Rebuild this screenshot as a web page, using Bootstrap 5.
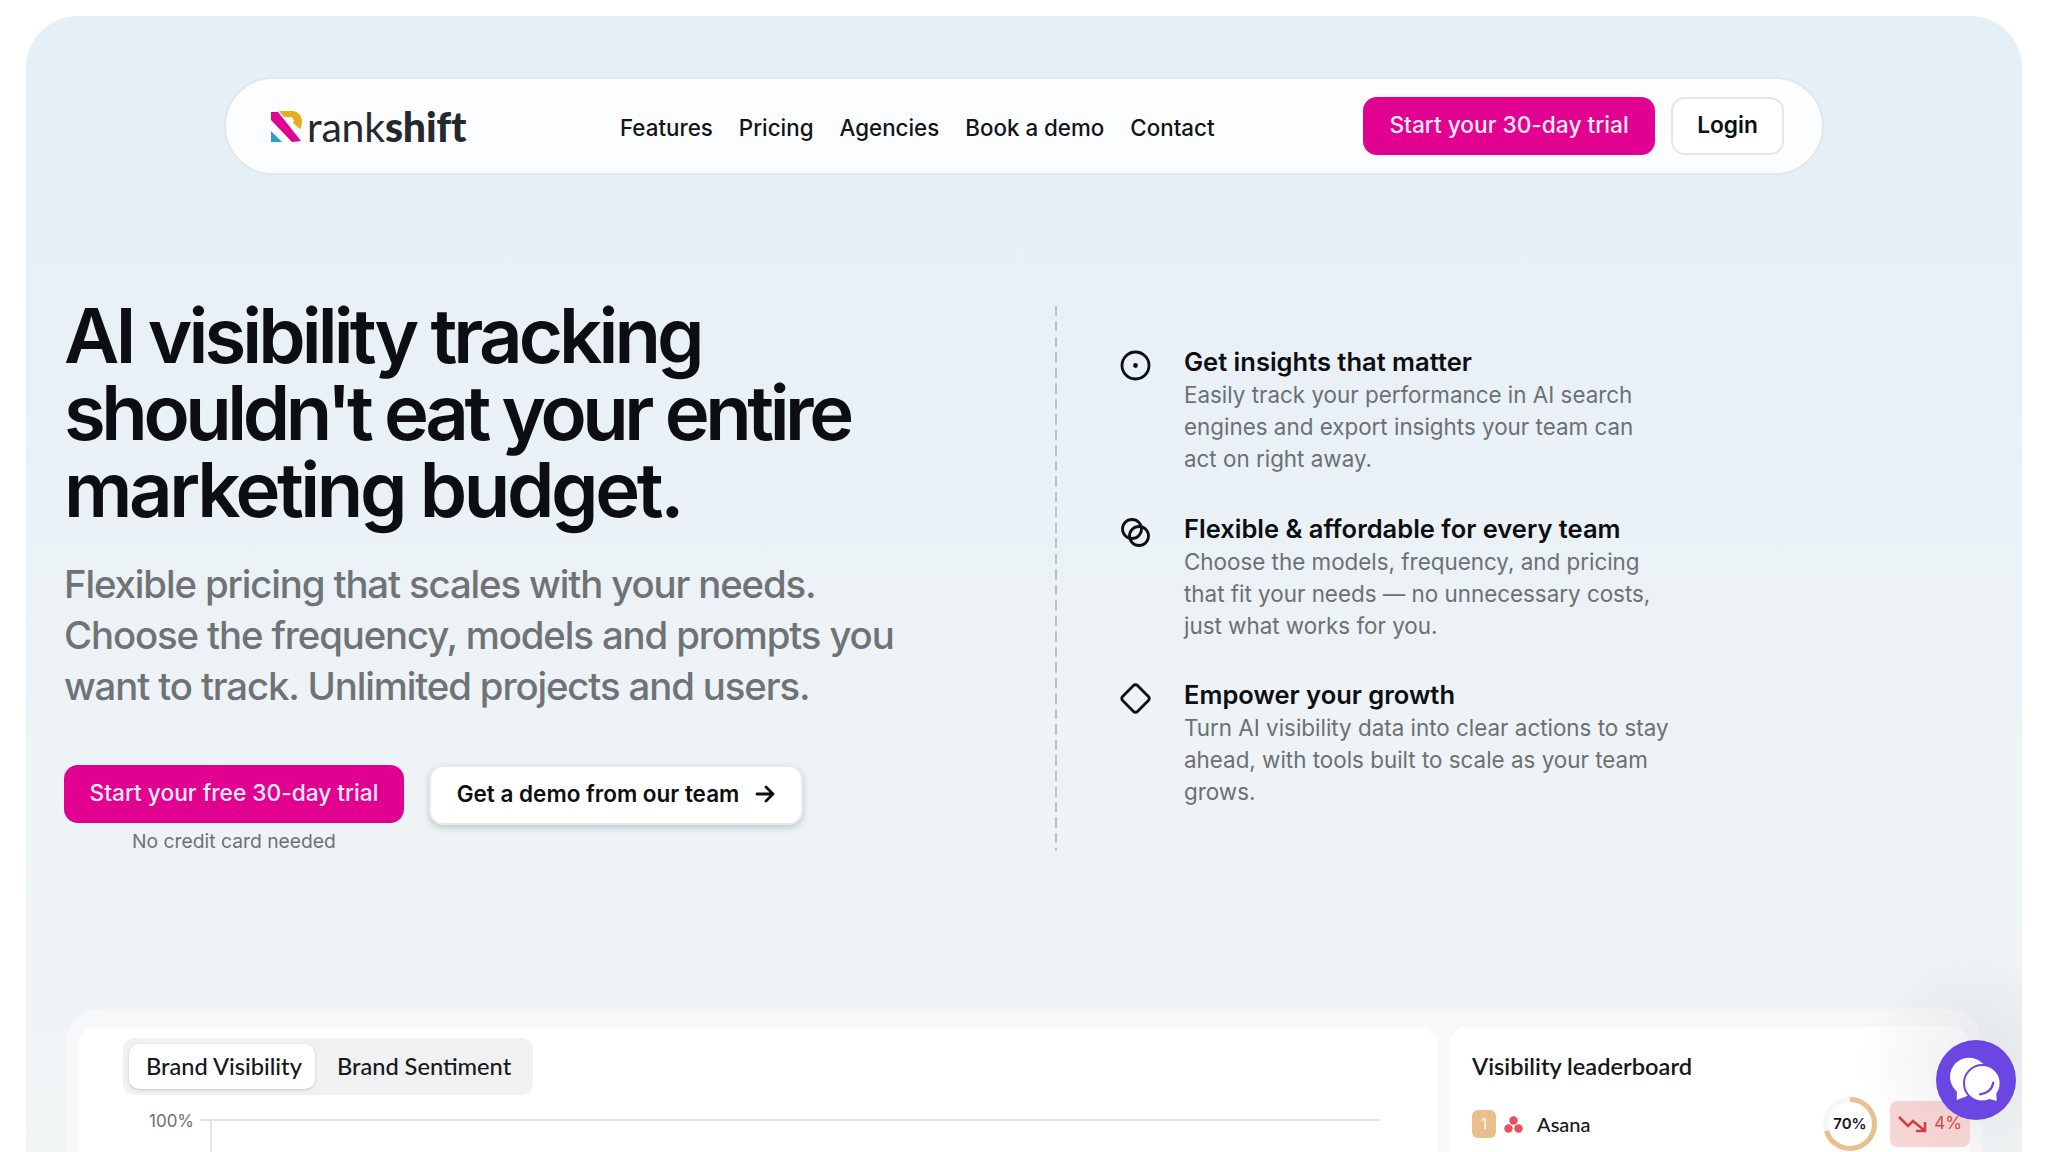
<!DOCTYPE html>
<html lang="en">
  <head>
    <meta charset="UTF-8" />
    <meta name="viewport" content="width=device-width, initial-scale=1.0" />
    <title>Rankshift</title>
    <link
      href="https://cdn.jsdelivr.net/npm/bootstrap@5.3.5/dist/css/bootstrap.min.css"
      rel="stylesheet"
    />
    <style>
      html,
      body {
        height: 1152px;
        overflow: hidden;
        background: #fff;
      }

      body {
        font-family: "Inter", "Liberation Sans", sans-serif;
      }

      .page-panel {
        position: relative;
        height: 1136px;
        margin: 16px 26px 0 26px;
        padding: 61px 38px 0 38px;
        border-radius: 52px 52px 0 0;
        background: linear-gradient(180deg, #e4eff7 0%, #eef3f6 65%, #f0f4f5 100%);
        overflow: hidden;
      }

      .top-bar {
        width: 1600px;
        height: 98px;
        margin-left: 160px;
        padding: 0 38px 0 45px;
        border: 2px solid #e2e7ea;
        border-radius: 49px;
        background: rgba(255, 255, 255, 0.85);
      }

      .logo-wrap {
        width: 349px;
      }

      .logo-text {
        font-family: "Lato", "Liberation Sans", sans-serif;
        font-size: 41px;
        line-height: 1;
        letter-spacing: -0.2px;
        color: #25282c;
      }

      .logo-text b {
        font-weight: 900;
      }

      .menu-link {
        font-size: 22.35px;
        font-weight: 500;
        color: #121416;
        text-decoration: none;
      }

      .menu-gap {
        gap: 26px;
        margin-top: 3px;
      }

      .btn-pink {
        background: #e20091;
        color: #fcebf6;
        font-size: 22.7px;
        font-weight: 500;
        border: 0;
        border-radius: 14px;
        height: 58px;
        width: 292px;
        padding: 0 0 2px 0;
      }

      .btn-pink:hover {
        background: #e20091;
        color: #fcebf6;
      }

      .btn-login {
        background: #fff;
        color: #0c0e10;
        font-size: 22.7px;
        font-weight: 600;
        border: 2px solid #e4e6e8;
        border-radius: 14px;
        height: 58px;
        width: 113px;
        padding: 0 0 2px 0;
      }

      .hero-row {
        height: 834px;
        padding-top: 122px;
      }

      .hero-left {
        width: 991px;
      }

      .hero-title {
        font-family: "Inter", "Liberation Sans", sans-serif;
        font-size: 76px;
        line-height: 77px;
        font-weight: 600;
        letter-spacing: -3.9px;
        color: #0c0e12;
        margin: 0 0 31px 0;
        white-space: nowrap;
      }

      .title-line-two {
        letter-spacing: -4.45px;
      }

      .title-line-three {
        letter-spacing: -3.4px;
      }

      .hero-sub {
        font-size: 38.35px;
        line-height: 51px;
        font-weight: 500;
        letter-spacing: -1.12px;
        color: #6f7376;
        margin: 0 0 53px 0;
        white-space: nowrap;
      }

      .btn-pink-lg {
        height: 58px;
        width: 340px;
      }

      .btn-demo {
        background: #fff;
        color: #0c0e10;
        font-size: 22.5px;
        font-weight: 600;
        border: 2px solid #e8eaec;
        border-radius: 14px;
        height: 60px;
        width: 374px;
        padding: 0 0 2px 0;
        box-shadow: 0 3px 6px rgba(60, 70, 80, 0.25);
      }

      .hero-actions {
        gap: 25px;
      }

      .note-text {
        width: 340px;
        font-size: 19.3px;
        color: #6e7276;
        text-align: center;
      }

      .hero-divider {
        width: 2px;
        height: 545px;
        margin-top: 9px;
        background: repeating-linear-gradient(180deg, #bcc1c4 0 10px, transparent 10px 15.5px);
      }

      .feature-list {
        width: 550px;
        margin-left: 63px;
        padding-top: 49px;
      }

      .feature-item {
        gap: 33px;
        margin-bottom: 37.5px;
      }

      .feature-icon {
        flex: 0 0 31px;
        margin-top: 4px;
      }

      .feature-title {
        font-size: 25.5px;
        line-height: 31px;
        padding-bottom: 2px;
        font-weight: 600;
        color: #0c0e12;
      }

      .feature-desc {
        font-size: 22.4px;
        line-height: 32px;
        color: #6b7075;
      }

      .dash-shell {
        width: 1918px;
        margin-left: 1px;
        padding: 18px 13px 0 13px;
        border-radius: 36px 36px 0 0;
        background: #f7f8f9;
        gap: 11px;
      }

      .dash-chart {
        width: 1360px;
        height: 300px;
        padding: 11px 45px;
        background: #fff;
        border-radius: 18px 18px 0 0;
      }

      .dash-board {
        width: 521px;
        height: 300px;
        padding: 24px 0 24px 23px;
        background: #fff;
        border-radius: 18px 18px 0 0;
      }

      .tab-box {
        width: 410px;
        height: 57px;
        padding: 6px;
        gap: 0;
        background: #f1f1f1;
        border-radius: 12px;
      }

      .tab-item {
        font-family: "Lato", "Inter", sans-serif;
        font-size: 23.6px;
        font-weight: 500;
        color: #15181b;
        padding: 0 0 0 22px;
        border-radius: 10px;
        white-space: nowrap;
      }

      .tab-on {
        padding: 0 13px 0 17px;
        background: #fff;
        box-shadow: 0 1px 3px rgba(0, 0, 0, 0.18);
      }

      .axis-label {
        width: 72px;
        margin-top: 16px;
        padding-left: 26px;
        font-size: 17px;
        line-height: 20px;
        color: #6b6f72;
      }

      .axis-plot {
        width: 1180px;
        height: 60px;
        margin-top: 24px;
        margin-left: 5px;
        border-top: 2px solid #e2e3e5;
      }

      .axis-stem {
        height: 60px;
        margin-left: 10px;
        border-left: 2px solid #e2e3e5;
      }

      .board-title {
        font-family: "Lato", "Inter", sans-serif;
        font-size: 23.6px;
        font-weight: 600;
        color: #15181b;
        line-height: 30px;
        margin-bottom: 16px;
      }

      .rank-box {
        width: 24px;
        height: 28px;
        border-radius: 6px;
        background: #e7c08e;
        color: #fdf6ec;
        font-size: 15px;
        line-height: 28px;
        text-align: center;
      }

      .brand-name {
        font-family: "Lato", "Inter", sans-serif;
        font-size: 20px;
        font-weight: 500;
        color: #15181b;
        margin-left: 14px;
      }

      .ring-box {
        width: 54px;
        height: 54px;
      }

      .ring-text {
        font-size: 15px;
        font-weight: 600;
        color: #15181b;
      }

      .trend-pill {
        width: 80px;
        height: 46px;
        margin-left: 13px;
        border-radius: 7px;
        background: #f8d7d6;
        color: #d9444a;
        font-size: 17px;
      }

      .chat-glow {
        position: absolute;
        right: 0;
        bottom: 0;
        width: 170px;
        height: 200px;
        background: radial-gradient(circle at 70% 55%, rgba(120, 120, 130, 0.12), rgba(120, 120, 130, 0) 70%);
      }

      .chat-btn {
        position: absolute;
        left: 1910px;
        top: 1024px;
        width: 80px;
        height: 80px;
        border-radius: 50%;
        background: #6c46e2;
      }
    </style>
  </head>

  <body>
    <div class="page-panel">
      <nav class="top-bar d-flex align-items-center">
        <div class="logo-wrap d-flex align-items-center gap-1">
          <svg width="32" height="31" viewBox="0 0 32 31">
            <polygon points="0,1 7,1 30,30 21,31 0,9" fill="#e20091" />
            <polygon points="0,20 0,31 11,31" fill="#2e9fc9" />
            <path d="M8,0 H22 A10,10 0 0 1 31,10 Q31,15 29,18 L22,12 Q24,8 20,6 H13 Z" fill="#e6ae1f" />
          </svg>
          <span class="logo-text">rank<b>shift</b></span>
        </div>
        <div class="d-flex menu-gap">
          <a class="menu-link" href="#">Features</a>
          <a class="menu-link" href="#">Pricing</a>
          <a class="menu-link" href="#">Agencies</a>
          <a class="menu-link" href="#">Book a demo</a>
          <a class="menu-link" href="#">Contact</a>
        </div>
        <div class="ms-auto d-flex align-items-center gap-3">
          <button class="btn btn-pink">Start your 30-day trial</button>
          <button class="btn btn-login">Login</button>
        </div>
      </nav>

      <div class="hero-row d-flex">
        <div class="hero-left">
          <h1 class="hero-title">
            <span class="d-block">AI visibility tracking</span>
            <span class="d-block title-line-two">shouldn't eat your entire</span>
            <span class="d-block title-line-three">marketing budget.</span>
          </h1>
          <p class="hero-sub">
            Flexible pricing that scales with your needs.<br />Choose the frequency, models and prompts you<br />want to track. Unlimited projects and users.
          </p>
          <div class="d-flex align-items-start hero-actions">
            <div>
              <button class="btn btn-pink btn-pink-lg">Start your free 30-day trial</button>
              <div class="note-text mt-1">No credit card needed</div>
            </div>
            <button class="btn btn-demo d-flex align-items-center justify-content-center gap-3">
              Get a demo from our team
              <svg width="20" height="20" viewBox="0 0 20 20" fill="none" stroke="#0c0e10" stroke-width="2.8" stroke-linecap="round" stroke-linejoin="round">
                <path d="M2 10H18M11 3L18 10L11 17" />
              </svg>
            </button>
          </div>
        </div>
        <div class="hero-divider"></div>
        <div class="feature-list">
          <div class="feature-item d-flex">
            <svg class="feature-icon" width="31" height="31" viewBox="0 0 31 31" fill="none" stroke="#0c0e12" stroke-width="2.8">
              <circle cx="15.5" cy="15.5" r="13.5" />
              <circle cx="15.5" cy="15.5" r="2.4" fill="#0c0e12" stroke="none" />
            </svg>
            <div>
              <div class="feature-title">Get insights that matter</div>
              <div class="feature-desc">Easily track your performance in AI search engines and export insights your team can act on right away.</div>
            </div>
          </div>
          <div class="feature-item d-flex">
            <svg class="feature-icon" width="31" height="31" viewBox="0 0 31 31" fill="none" stroke="#0c0e12" stroke-width="2.8">
              <circle cx="12" cy="12" r="9.5" />
              <circle cx="19" cy="19" r="9.5" />
            </svg>
            <div>
              <div class="feature-title">Flexible &amp; affordable for every team</div>
              <div class="feature-desc">Choose the models, frequency, and pricing that fit your needs — no unnecessary costs, just what works for you.</div>
            </div>
          </div>
          <div class="feature-item d-flex">
            <svg class="feature-icon" width="31" height="31" viewBox="0 0 31 31" fill="none" stroke="#0c0e12" stroke-width="2.8" stroke-linejoin="round">
              <path d="M13.5 2.6a2.8 2.8 0 0 1 4 0L28.4 13.5a2.8 2.8 0 0 1 0 4L17.5 28.4a2.8 2.8 0 0 1 -4 0L2.6 17.5a2.8 2.8 0 0 1 0 -4Z" />
            </svg>
            <div>
              <div class="feature-title">Empower your growth</div>
              <div class="feature-desc">Turn AI visibility data into clear actions to stay ahead, with tools built to scale as your team grows.</div>
            </div>
          </div>
        </div>
      </div>

      <div class="dash-shell d-flex">
        <div class="dash-chart">
          <div class="tab-box d-flex align-items-stretch">
            <div class="tab-item tab-on d-flex align-items-center">Brand Visibility</div>
            <div class="tab-item d-flex align-items-center">Brand Sentiment</div>
          </div>
          <div class="d-flex">
            <div class="axis-label">100%</div>
            <div class="axis-plot"><div class="axis-stem"></div></div>
          </div>
        </div>
        <div class="dash-board">
          <div class="board-title">Visibility leaderboard</div>
          <div class="d-flex align-items-center">
            <div class="rank-box">1</div>
            <svg class="ms-2" width="19" height="17" viewBox="0 0 19 17" fill="#e8505b">
              <circle cx="9.5" cy="4.5" r="4.2" />
              <circle cx="4.5" cy="12.5" r="4.2" />
              <circle cx="14.5" cy="12.5" r="4.2" />
            </svg>
            <span class="brand-name">Asana</span>
            <div class="ring-box ms-auto position-relative d-flex align-items-center justify-content-center">
              <svg class="position-absolute top-0 start-0" width="54" height="54" viewBox="0 0 54 54" fill="none">
                <circle cx="27" cy="27" r="24.5" stroke="#f6f6f6" stroke-width="5" />
                <circle cx="27" cy="27" r="24.5" stroke="#e7c08e" stroke-width="5" stroke-dasharray="107.8 154" transform="rotate(-90 27 27)" />
              </svg>
              <span class="ring-text">70%</span>
            </div>
            <div class="trend-pill d-flex align-items-center justify-content-center gap-1">
              <svg width="32" height="18" viewBox="0 0 32 18" fill="none" stroke="#d63c3f" stroke-width="2.6">
                <path d="M1 2L10 11L15 6L27 16M27 7V16H18" />
              </svg>
              4%
            </div>
          </div>
        </div>
      </div>

      <div class="chat-glow"></div>
      <div class="chat-btn">
        <svg class="d-block" width="80" height="80" viewBox="0 0 80 80">
          <circle cx="33" cy="36.7" r="19" fill="#fff" />
          <path d="M20.7 60L21 47L34 55Z" fill="#fff" />
          <circle cx="46.3" cy="43.3" r="18.3" fill="#fff" stroke="#6c46e2" stroke-width="2" />
          <path d="M60.7 61L50 58L60 50Z" fill="#fff" />
          <path d="M44 54.3C50 54 56 50 57.3 42.7" fill="none" stroke="#6c46e2" stroke-width="2.2" stroke-linecap="round" />
        </svg>
      </div>
    </div>

    <script src="https://cdn.jsdelivr.net/npm/bootstrap@5.3.5/dist/js/bootstrap.bundle.min.js"></script>
  </body>
</html>
